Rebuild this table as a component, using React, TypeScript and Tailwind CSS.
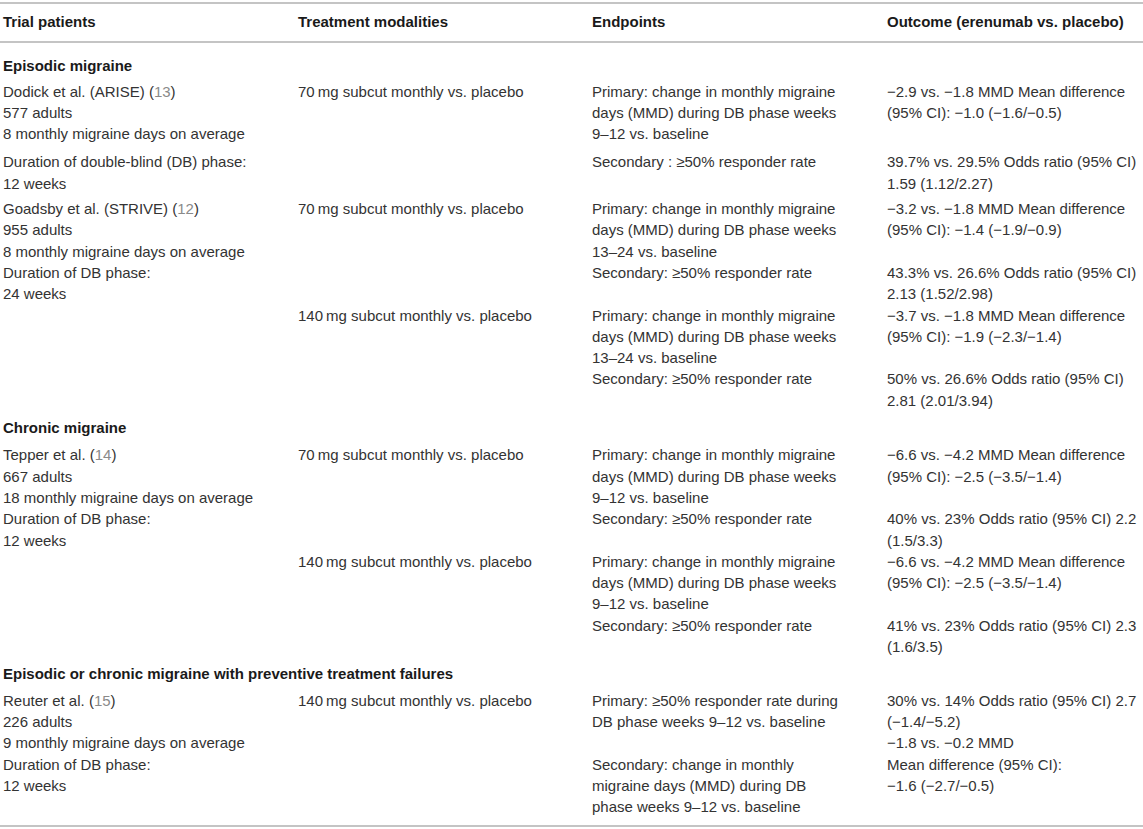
import type { ReactNode } from "react";

type Pair = { e: ReactNode[]; o: ReactNode[] };
type Row = { pt: string; c1: ReactNode[]; c2: ReactNode[]; pairs: Pair[] };

const Ref = ({ n }: { n: string }) => <span className="text-[#8a8a8a]">{n}</span>;

const sec50 = "Secondary: \u226550% responder rate";

const groups: { title: string; titlePt: string; rows: Row[] }[] = [
  {
    title: "Episodic migraine",
    titlePt: "pt-[12px]",
    rows: [
      {
        pt: "pt-[4px]",
        c1: [
          <>Dodick et al. (ARISE) (<Ref n="13" />)</>,
          "577 adults",
          "8 monthly migraine days on average",
        ],
        c2: ["70\u2009mg subcut monthly vs. placebo"],
        pairs: [
          {
            e: ["Primary: change in monthly migraine", "days (MMD) during DB phase weeks", "9–12 vs. baseline"],
            o: ["−2.9 vs. −1.8 MMD Mean difference", "(95% CI): −1.0 (−1.6/−0.5)"],
          },
        ],
      },
      {
        pt: "pt-[7px]",
        c1: ["Duration of double-blind (DB) phase:", "12 weeks"],
        c2: [],
        pairs: [
          {
            e: ["Secondary : \u226550% responder rate"],
            o: ["39.7% vs. 29.5% Odds ratio (95% CI)", "1.59 (1.12/2.27)"],
          },
        ],
      },
      {
        pt: "pt-[4px]",
        c1: [
          <>Goadsby et al. (STRIVE) (<Ref n="12" />)</>,
          "955 adults",
          "8 monthly migraine days on average",
          "Duration of DB phase:",
          "24 weeks",
        ],
        c2: ["70\u2009mg subcut monthly vs. placebo"],
        pairs: [
          {
            e: ["Primary: change in monthly migraine", "days (MMD) during DB phase weeks", "13–24 vs. baseline"],
            o: ["−3.2 vs. −1.8 MMD Mean difference", "(95% CI): −1.4 (−1.9/−0.9)"],
          },
          { e: [sec50], o: ["43.3% vs. 26.6% Odds ratio (95% CI)", "2.13 (1.52/2.98)"] },
        ],
      },
      {
        pt: "pt-0",
        c1: [],
        c2: ["140\u2009mg subcut monthly vs. placebo"],
        pairs: [
          {
            e: ["Primary: change in monthly migraine", "days (MMD) during DB phase weeks", "13–24 vs. baseline"],
            o: ["−3.7 vs. −1.8 MMD Mean difference", "(95% CI): −1.9 (−2.3/−1.4)"],
          },
          { e: [sec50], o: ["50% vs. 26.6% Odds ratio (95% CI)", "2.81 (2.01/3.94)"] },
        ],
      },
    ],
  },
  {
    title: "Chronic migraine",
    titlePt: "pt-[6px]",
    rows: [
      {
        pt: "pt-[6px]",
        c1: [
          <>Tepper et al. (<Ref n="14" />)</>,
          "667 adults",
          "18 monthly migraine days on average",
          "Duration of DB phase:",
          "12 weeks",
        ],
        c2: ["70\u2009mg subcut monthly vs. placebo"],
        pairs: [
          {
            e: ["Primary: change in monthly migraine", "days (MMD) during DB phase weeks", "9–12 vs. baseline"],
            o: ["−6.6 vs. −4.2 MMD Mean difference", "(95% CI): −2.5 (−3.5/−1.4)"],
          },
          { e: [sec50], o: ["40% vs. 23% Odds ratio (95% CI) 2.2", "(1.5/3.3)"] },
        ],
      },
      {
        pt: "pt-0",
        c1: [],
        c2: ["140\u2009mg subcut monthly vs. placebo"],
        pairs: [
          {
            e: ["Primary: change in monthly migraine", "days (MMD) during DB phase weeks", "9–12 vs. baseline"],
            o: ["−6.6 vs. −4.2 MMD Mean difference", "(95% CI): −2.5 (−3.5/−1.4)"],
          },
          { e: [sec50], o: ["41% vs. 23% Odds ratio (95% CI) 2.3", "(1.6/3.5)"] },
        ],
      },
    ],
  },
  {
    title: "Episodic or chronic migraine with preventive treatment failures",
    titlePt: "pt-[6px]",
    rows: [
      {
        pt: "pt-[5px]",
        c1: [
          <>Reuter et al. (<Ref n="15" />)</>,
          "226 adults",
          "9 monthly migraine days on average",
          "Duration of DB phase:",
          "12 weeks",
        ],
        c2: ["140\u2009mg subcut monthly vs. placebo"],
        pairs: [
          {
            e: [
              "Primary: \u226550% responder rate during",
              "DB phase weeks 9–12 vs. baseline",
              "",
              "Secondary: change in monthly",
              "migraine days (MMD) during DB",
              "phase weeks 9–12 vs. baseline",
            ],
            o: [
              "30% vs. 14% Odds ratio (95% CI) 2.7",
              "(−1.4/−5.2)",
              "−1.8 vs. −0.2 MMD",
              "Mean difference (95% CI):",
              "−1.6 (−2.7/−0.5)",
            ],
          },
        ],
      },
    ],
  },
];

function Lines({ items }: { items: ReactNode[] }) {
  return (
    <div className="flex flex-col">
      {items.map((t, i) => (
        <div key={i} className="whitespace-nowrap">
          {t === "" ? "\u00a0" : t}
        </div>
      ))}
    </div>
  );
}

export default function App() {
  return (
    <div className="min-h-screen bg-white pt-[2px] font-['Liberation_Sans',Arial,sans-serif] text-[15px] leading-[21.3px] text-[#333333]">
      <div className="border-y-2 border-[#c4c4c4] pl-[3px] pt-[7px] pb-[9px] grid grid-cols-[295px_294px_295px_1fr] font-bold text-[#1a1a1a]">
        <div>Trial patients</div>
        <div>Treatment modalities</div>
        <div>Endpoints</div>
        <div className="whitespace-nowrap">Outcome (erenumab vs. placebo)</div>
      </div>

      <div className="border-b-2 border-[#c4c4c4] pl-[3px] pb-[8px]">
        {groups.map((g) => (
          <div key={g.title}>
            <div className={`${g.titlePt} font-bold text-[#1a1a1a]`}>{g.title}</div>
            {g.rows.map((r, i) => (
              <div key={i} className={`grid grid-cols-[295px_294px_1fr] ${r.pt}`}>
                <Lines items={r.c1} />
                <Lines items={r.c2} />
                <div className="flex flex-col">
                  {r.pairs.map((p, j) => (
                    <div key={j} className="grid grid-cols-[295px_1fr]">
                      <Lines items={p.e} />
                      <Lines items={p.o} />
                    </div>
                  ))}
                </div>
              </div>
            ))}
          </div>
        ))}
      </div>
    </div>
  );
}
